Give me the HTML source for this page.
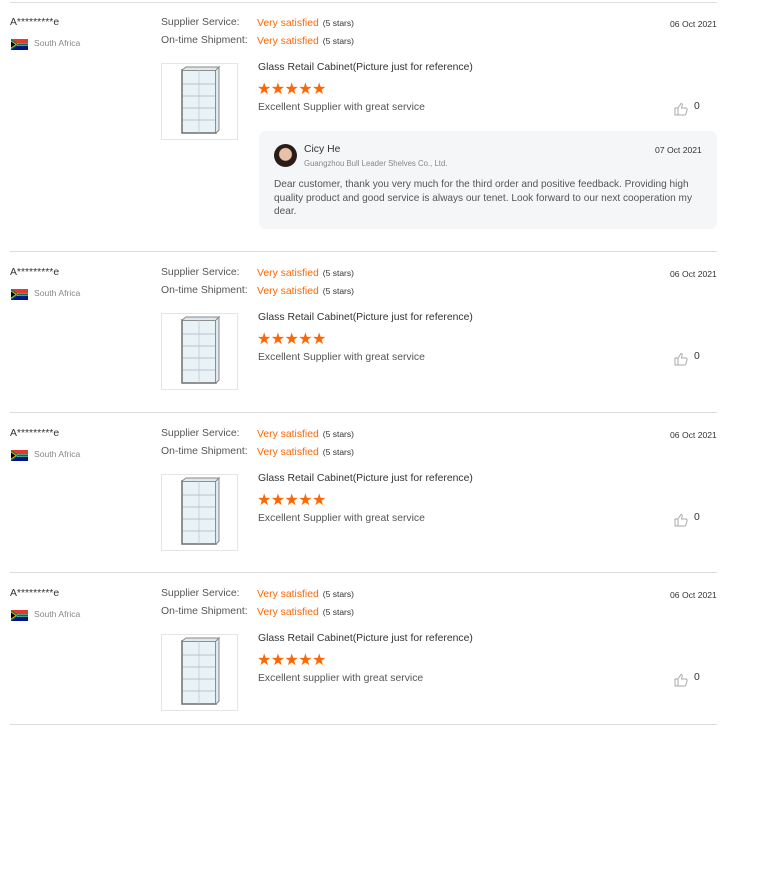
<!DOCTYPE html>
<html><head><meta charset="utf-8"><style>
*{margin:0;padding:0;box-sizing:border-box}
body{width:760px;height:726px;background:#fff;font-family:"Liberation Sans",Arial,sans-serif;color:#333;position:relative;overflow:hidden}
.b{position:absolute;left:0;width:760px;height:170px}
.line{position:absolute;left:10px;width:707px;height:1px;background:#ddd;top:0}
.a{position:absolute;font-size:10.4px;line-height:14px;white-space:nowrap}
.g{color:#555}
.o{color:#f60}
.s{font-size:8.5px;color:#333;margin-left:4px}
.img{position:absolute;left:161px;top:60px;width:77px;height:77px;border:1px solid #e5e5e5;background:#fff}
.flag{position:absolute;left:11px;top:36px;width:17px;height:11px}
.stars{position:absolute;left:257px;top:78px;color:#f60;font-size:16px;letter-spacing:-0.6px;line-height:18px}
.d{position:absolute;left:670px;top:15px;font-size:8.6px;line-height:12px}
.reply{position:absolute;left:259px;top:128px;width:458px;height:98px;background:#f5f6f8;border-radius:6px}
</style></head><body>

<div class="b" style="top:2px"><div class="line"></div></div>
<div class="b" style="top:251px"><div class="line"></div></div>
<div class="b" style="top:412px"><div class="line"></div></div>
<div class="b" style="top:572px"><div class="line"></div></div>
<div class="b" style="top:724px"><div class="line"></div></div>

<div class="b" style="top:3px">
 <div class="a" style="left:10px;top:13px">A*********e</div>
 <svg class="flag" viewBox="0 0 17 11"><rect width="17" height="11" fill="#fff"/><rect width="17" height="4" fill="#e03c31"/><rect y="7" width="17" height="4" fill="#001489"/><path d="M0 0L8 5.5L0 11Z" fill="#007749"/><path d="M0 1.5L6 5.5L0 9.5Z" fill="#ffb81c"/><path d="M0 2.5L4.5 5.5L0 8.5Z" fill="#000"/><rect x="7" y="4.3" width="10" height="2.4" fill="#007749"/></svg>
 <div class="a" style="left:34px;top:33px;font-size:8.6px;color:#888">South Africa</div>
 <div class="a g" style="left:161px;top:13px">Supplier Service:</div>
 <div class="a" style="left:257px;top:13px"><span class="o">Very satisfied</span><span class="s">(5 stars)</span></div>
 <div class="a g" style="left:161px;top:31px">On-time Shipment:</div>
 <div class="a" style="left:257px;top:31px"><span class="o">Very satisfied</span><span class="s">(5 stars)</span></div>
 <div class="d">06 Oct 2021</div>
 <div class="img"><svg width="77" height="77" viewBox="0 0 77 77"><rect x="20" y="6" width="34" height="63" fill="#e9f2f6" stroke="#777" stroke-width="1.6"/><path d="M20 6L24 3L57 3L54 6M54 6L57 3L57 66L54 69" fill="#dfe9ee" stroke="#888"/><path d="M21 20H53M21 32H53M21 44H53M21 56H53" stroke="#a8b4bb" stroke-width=".8"/><line x1="37" y1="6" x2="37" y2="69" stroke="#bbb" stroke-width=".6"/></svg></div>
 <div class="a" style="left:258px;top:58px">Glass Retail Cabinet(Picture just for reference)</div>
 <div class="stars">★★★★★</div>
 <div class="a g" style="left:258px;top:98px">Excellent Supplier with great service</div>
 <svg style="position:absolute;left:674px;top:99px" width="14" height="14" viewBox="0 0 14 14"><path d="M1 6H4V13H1Z M4 6L7 1.5C8.2 1.5 8.5 2.5 8 4L7.5 6H12C13 6 13.3 7 13 8L11.8 12.2C11.6 12.8 11 13 10.5 13H4" fill="none" stroke="#aaa" stroke-width="1"/></svg>
 <div class="a" style="left:694px;top:97px">0</div>
 <div class="reply">
  <div style="position:absolute;left:15px;top:13px;width:23px;height:23px;border-radius:50%;background:radial-gradient(circle at 50% 45%,#e8c2a8 0 35%,#2a1d18 40%)"></div>
  <div class="a" style="left:45px;top:12px;font-size:10.4px">Cicy He</div>
  <div class="a" style="left:45px;top:26px;font-size:7.8px;color:#888">Guangzhou Bull Leader Shelves Co., Ltd.</div>
  <div class="a" style="left:396px;top:12px;font-size:8.6px">07 Oct 2021</div>
  <div class="a g" style="left:15px;top:47px;white-space:normal;width:432px;font-size:10.1px;line-height:13.5px">Dear customer, thank you very much for the third order and positive feedback. Providing high quality product and good service is always our tenet. Look forward to our next cooperation my dear.</div>
 </div>
</div>

<div class="b" style="top:253px">
 <div class="a" style="left:10px;top:13px">A*********e</div>
 <svg class="flag" viewBox="0 0 17 11"><rect width="17" height="11" fill="#fff"/><rect width="17" height="4" fill="#e03c31"/><rect y="7" width="17" height="4" fill="#001489"/><path d="M0 0L8 5.5L0 11Z" fill="#007749"/><path d="M0 1.5L6 5.5L0 9.5Z" fill="#ffb81c"/><path d="M0 2.5L4.5 5.5L0 8.5Z" fill="#000"/><rect x="7" y="4.3" width="10" height="2.4" fill="#007749"/></svg>
 <div class="a" style="left:34px;top:33px;font-size:8.6px;color:#888">South Africa</div>
 <div class="a g" style="left:161px;top:13px">Supplier Service:</div>
 <div class="a" style="left:257px;top:13px"><span class="o">Very satisfied</span><span class="s">(5 stars)</span></div>
 <div class="a g" style="left:161px;top:31px">On-time Shipment:</div>
 <div class="a" style="left:257px;top:31px"><span class="o">Very satisfied</span><span class="s">(5 stars)</span></div>
 <div class="d">06 Oct 2021</div>
 <div class="img"><svg width="77" height="77" viewBox="0 0 77 77"><rect x="20" y="6" width="34" height="63" fill="#e9f2f6" stroke="#777" stroke-width="1.6"/><path d="M20 6L24 3L57 3L54 6M54 6L57 3L57 66L54 69" fill="#dfe9ee" stroke="#888"/><path d="M21 20H53M21 32H53M21 44H53M21 56H53" stroke="#a8b4bb" stroke-width=".8"/><line x1="37" y1="6" x2="37" y2="69" stroke="#bbb" stroke-width=".6"/></svg></div>
 <div class="a" style="left:258px;top:58px">Glass Retail Cabinet(Picture just for reference)</div>
 <div class="stars">★★★★★</div>
 <div class="a g" style="left:258px;top:98px">Excellent Supplier with great service</div>
 <svg style="position:absolute;left:674px;top:99px" width="14" height="14" viewBox="0 0 14 14"><path d="M1 6H4V13H1Z M4 6L7 1.5C8.2 1.5 8.5 2.5 8 4L7.5 6H12C13 6 13.3 7 13 8L11.8 12.2C11.6 12.8 11 13 10.5 13H4" fill="none" stroke="#aaa" stroke-width="1"/></svg>
 <div class="a" style="left:694px;top:97px">0</div>
</div>

<div class="b" style="top:414px">
 <div class="a" style="left:10px;top:13px">A*********e</div>
 <svg class="flag" viewBox="0 0 17 11"><rect width="17" height="11" fill="#fff"/><rect width="17" height="4" fill="#e03c31"/><rect y="7" width="17" height="4" fill="#001489"/><path d="M0 0L8 5.5L0 11Z" fill="#007749"/><path d="M0 1.5L6 5.5L0 9.5Z" fill="#ffb81c"/><path d="M0 2.5L4.5 5.5L0 8.5Z" fill="#000"/><rect x="7" y="4.3" width="10" height="2.4" fill="#007749"/></svg>
 <div class="a" style="left:34px;top:33px;font-size:8.6px;color:#888">South Africa</div>
 <div class="a g" style="left:161px;top:13px">Supplier Service:</div>
 <div class="a" style="left:257px;top:13px"><span class="o">Very satisfied</span><span class="s">(5 stars)</span></div>
 <div class="a g" style="left:161px;top:31px">On-time Shipment:</div>
 <div class="a" style="left:257px;top:31px"><span class="o">Very satisfied</span><span class="s">(5 stars)</span></div>
 <div class="d">06 Oct 2021</div>
 <div class="img"><svg width="77" height="77" viewBox="0 0 77 77"><rect x="20" y="6" width="34" height="63" fill="#e9f2f6" stroke="#777" stroke-width="1.6"/><path d="M20 6L24 3L57 3L54 6M54 6L57 3L57 66L54 69" fill="#dfe9ee" stroke="#888"/><path d="M21 20H53M21 32H53M21 44H53M21 56H53" stroke="#a8b4bb" stroke-width=".8"/><line x1="37" y1="6" x2="37" y2="69" stroke="#bbb" stroke-width=".6"/></svg></div>
 <div class="a" style="left:258px;top:58px">Glass Retail Cabinet(Picture just for reference)</div>
 <div class="stars">★★★★★</div>
 <div class="a g" style="left:258px;top:98px">Excellent Supplier with great service</div>
 <svg style="position:absolute;left:674px;top:99px" width="14" height="14" viewBox="0 0 14 14"><path d="M1 6H4V13H1Z M4 6L7 1.5C8.2 1.5 8.5 2.5 8 4L7.5 6H12C13 6 13.3 7 13 8L11.8 12.2C11.6 12.8 11 13 10.5 13H4" fill="none" stroke="#aaa" stroke-width="1"/></svg>
 <div class="a" style="left:694px;top:97px">0</div>
</div>

<div class="b" style="top:574px">
 <div class="a" style="left:10px;top:13px">A*********e</div>
 <svg class="flag" viewBox="0 0 17 11"><rect width="17" height="11" fill="#fff"/><rect width="17" height="4" fill="#e03c31"/><rect y="7" width="17" height="4" fill="#001489"/><path d="M0 0L8 5.5L0 11Z" fill="#007749"/><path d="M0 1.5L6 5.5L0 9.5Z" fill="#ffb81c"/><path d="M0 2.5L4.5 5.5L0 8.5Z" fill="#000"/><rect x="7" y="4.3" width="10" height="2.4" fill="#007749"/></svg>
 <div class="a" style="left:34px;top:33px;font-size:8.6px;color:#888">South Africa</div>
 <div class="a g" style="left:161px;top:13px">Supplier Service:</div>
 <div class="a" style="left:257px;top:13px"><span class="o">Very satisfied</span><span class="s">(5 stars)</span></div>
 <div class="a g" style="left:161px;top:31px">On-time Shipment:</div>
 <div class="a" style="left:257px;top:31px"><span class="o">Very satisfied</span><span class="s">(5 stars)</span></div>
 <div class="d">06 Oct 2021</div>
 <div class="img"><svg width="77" height="77" viewBox="0 0 77 77"><rect x="20" y="6" width="34" height="63" fill="#e9f2f6" stroke="#777" stroke-width="1.6"/><path d="M20 6L24 3L57 3L54 6M54 6L57 3L57 66L54 69" fill="#dfe9ee" stroke="#888"/><path d="M21 20H53M21 32H53M21 44H53M21 56H53" stroke="#a8b4bb" stroke-width=".8"/><line x1="37" y1="6" x2="37" y2="69" stroke="#bbb" stroke-width=".6"/></svg></div>
 <div class="a" style="left:258px;top:58px">Glass Retail Cabinet(Picture just for reference)</div>
 <div class="stars">★★★★★</div>
 <div class="a g" style="left:258px;top:98px">Excellent supplier with great service</div>
 <svg style="position:absolute;left:674px;top:99px" width="14" height="14" viewBox="0 0 14 14"><path d="M1 6H4V13H1Z M4 6L7 1.5C8.2 1.5 8.5 2.5 8 4L7.5 6H12C13 6 13.3 7 13 8L11.8 12.2C11.6 12.8 11 13 10.5 13H4" fill="none" stroke="#aaa" stroke-width="1"/></svg>
 <div class="a" style="left:694px;top:97px">0</div>
</div>

</body></html>
